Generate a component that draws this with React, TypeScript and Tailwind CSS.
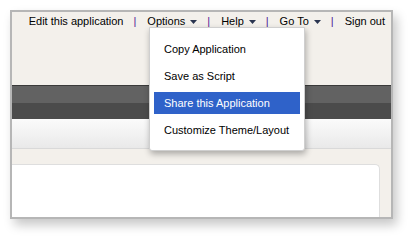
import { Fragment } from 'react'

const navItems = [
  { label: 'Edit this application', caret: false },
  { label: 'Options', caret: true },
  { label: 'Help', caret: true },
  { label: 'Go To', caret: true },
  { label: 'Sign out', caret: false },
]

const menuItems = ['Copy Application', 'Save as Script', 'Share this Application', 'Customize Theme/Layout']

const Caret = () => (
  <svg width="7" height="4" viewBox="0 0 7 4" className="ml-[5px] mt-[2px]">
    <path d="M0 0 H7 L3.5 4 Z" fill="#2a3550" />
  </svg>
)

export default function App() {
  return (
    <div className="w-[414px] h-[240px] bg-white pt-[10px] pl-[10px] font-['Liberation_Sans',Arial,sans-serif] text-[11px] text-black">
      <div className="relative w-[383px] h-[209px] border-2 border-[#b6b6b6] bg-[#f3f0eb] shadow-[4px_6px_10px_rgba(0,0,0,0.22)] flex flex-col">
        {/* Barra superior */}
        <div className="h-[73px] shrink-0 flex justify-end pt-[2px] pr-[6px]">
          <div className="flex items-start leading-[14px]">
            {navItems.map((item, i) => (
              <Fragment key={item.label}>
                {i > 0 && <span className="pl-[10px] pr-[11px] text-[#4f1a96]">|</span>}
                <span className="flex items-center">
                  {item.label}
                  {item.caret && <Caret />}
                </span>
              </Fragment>
            ))}
          </div>
        </div>

        {/* Banda oscura */}
        <div className="h-[1px] shrink-0 bg-[#3a3a3a]" />
        <div className="h-[17px] shrink-0 bg-[#626262]" />
        <div className="h-[16px] shrink-0 bg-[#4b4b4b]" />
        <div className="h-[29px] shrink-0 bg-gradient-to-b from-[#fbfbfb] to-[#e9e9e9]" />
        <div className="h-[1px] shrink-0 bg-[#d9d9d9]" />
        <div className="h-[15px] shrink-0" />

        {/* Panel de contenido */}
        <div className="flex-1 mr-[11px] bg-white border-t border-r border-[#dedede] rounded-tr-[5px]" />

        {/* Menú desplegable */}
        <div className="absolute left-[137px] top-[15px] w-[156px] h-[124px] bg-white border border-[#cfcfcf] rounded-b-[3px] shadow-[1px_3px_6px_rgba(0,0,0,0.3)] pt-[10px] px-[4px] flex flex-col gap-[5px]">
          {menuItems.map((label) => (
            <div
              key={label}
              className={
                label === 'Share this Application'
                  ? 'h-[22px] flex items-center pl-[10px] bg-[#2f62c9] text-white'
                  : 'h-[22px] flex items-center pl-[10px]'
              }
            >
              {label}
            </div>
          ))}
        </div>
      </div>
    </div>
  )
}
